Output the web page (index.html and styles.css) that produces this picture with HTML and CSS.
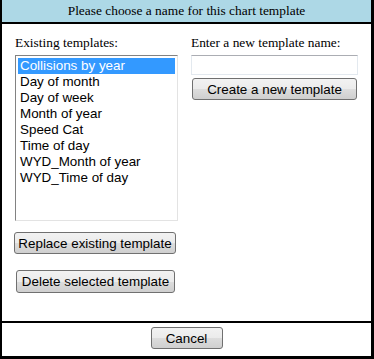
FILE: index.html
```html
<!DOCTYPE html>
<html lang="en">
<head>
    <meta charset="UTF-8">
    <title>Save chart template</title>
    <link rel="stylesheet" href="styles.css">
</head>
<body>
    <div class="dialog">
        <div class="dialog-title">Please choose a name for this chart template</div>

        <div class="dialog-body">
            <div class="col col-left">
                <label class="field-label">Existing templates:</label>
                <ul class="listbox">
                    <li class="selected">Collisions by year</li>
                    <li>Day of month</li>
                    <li>Day of week</li>
                    <li>Month of year</li>
                    <li>Speed Cat</li>
                    <li>Time of day</li>
                    <li>WYD_Month of year</li>
                    <li>WYD_Time of day</li>
                </ul>
                <button class="btn btn-replace">Replace existing template</button>
                <button class="btn btn-delete">Delete selected template</button>
            </div>

            <div class="col col-right">
                <label class="field-label">Enter a new template name:</label>
                <input class="text-input" type="text">
                <button class="btn btn-create">Create a new template</button>
            </div>
        </div>

        <div class="dialog-footer">
            <button class="btn btn-cancel">Cancel</button>
        </div>
    </div>
</body>
</html>
```

FILE: styles.css
```css
body {
    margin: 0;
    padding: 0;
    background: #fff;
    font-family: "Liberation Serif", "Times New Roman", serif;
    font-size: 13.4px;
    color: #000;
}
.dialog {
    width: 374px;
    height: 359px;
    box-sizing: border-box;
    border-left: 2px solid #000;
    border-right: 3px solid #000;
    border-bottom: 3px solid #000;
    display: flex;
    flex-direction: column;
}
.dialog-title {
    height: 22px;
    line-height: 22px;
    background: #add8e6;
    text-align: center;
    border-bottom: 2px solid #000;
}
.dialog-body {
    height: 297px;
    display: grid;
    grid-template-columns: 163px 167px;
    column-gap: 13px;
    padding: 11px 0 0 13px;
    box-sizing: border-box;
}
.col {
    display: flex;
    flex-direction: column;
}
.field-label {
    display: block;
    line-height: 15px;
    height: 15px;
    margin-bottom: 5px;
}
.listbox {
    list-style: none;
    margin: 0;
    padding: 2px;
    height: 166px;
    box-sizing: border-box;
    border: 1px solid #e3e3e3;
    border-top-color: #828282;
    border-left-color: #828282;
    font-family: "Liberation Sans", Arial, sans-serif;
    font-size: 13.4px;
}
.listbox li {
    line-height: 16px;
    height: 16px;
    padding-left: 2px;
    white-space: nowrap;
}
.listbox li.selected {
    background: #3399ff;
    color: #fff;
}
.text-input {
    height: 20px;
    width: 167px;
    box-sizing: border-box;
    margin: 0;
    border: 1px solid #e3e9ef;
    border-top-color: #abadb3;
    padding: 0 2px;
}
.btn {
    font-family: "Liberation Sans", Arial, sans-serif;
    font-size: 13.4px;
    color: #000;
    height: 22px;
    padding: 0;
    margin: 0;
    border: 1px solid #707070;
    border-radius: 3px;
    background: linear-gradient(to bottom, #f2f2f2 0%, #ebebeb 50%, #dddddd 51%, #cfcfcf 100%);
    box-sizing: border-box;
}
.btn-create {
    width: 165px;
    margin: 3px 0 0 1px;
}
.btn-replace {
    width: 162px;
    margin: 11px 0 0 -1px;
}
.btn-delete {
    width: 159px;
    height: 23px;
    margin: 16px 0 0 1px;
}
.dialog-footer {
    flex: 1;
    border-top: 2px solid #000;
    display: flex;
    justify-content: center;
    padding-top: 4px;
    box-sizing: border-box;
}
.btn-cancel {
    width: 72px;
}
```
